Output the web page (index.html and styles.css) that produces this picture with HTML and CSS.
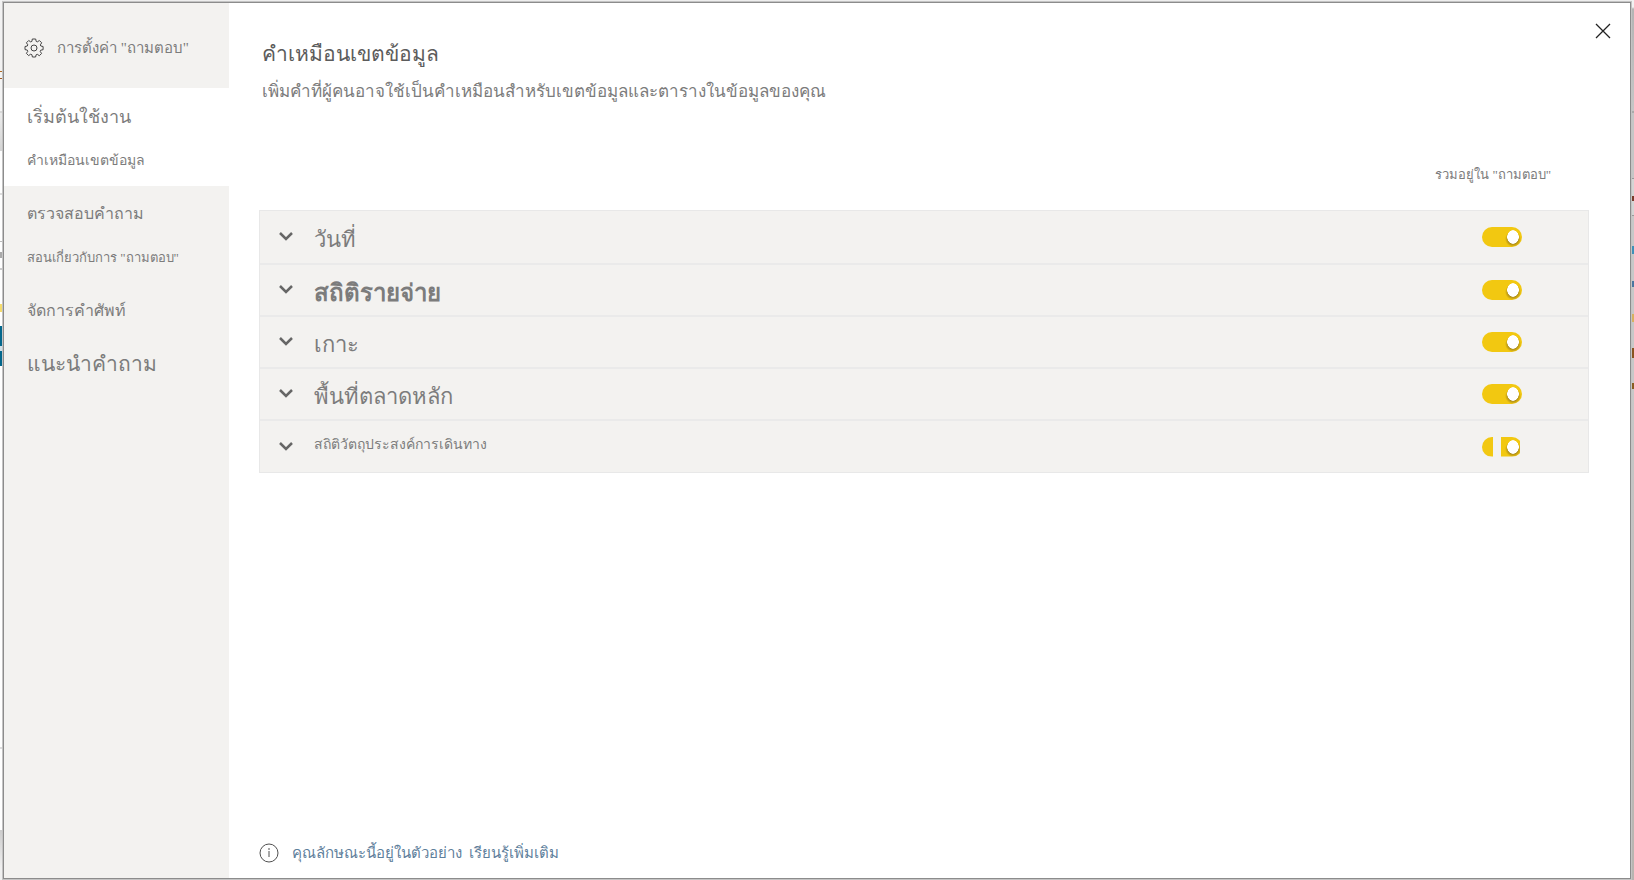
FILE: index.html
```
<!DOCTYPE html>
<html lang="th">
<head>
<meta charset="utf-8">
<title>การตั้งค่า "ถามตอบ"</title>
<link rel="stylesheet" href="styles.css">
</head>
<body>
<div class="backdrop">
<div class="edge edge-left"></div>
<div class="dialog" role="dialog" aria-labelledby="dialog-title">
  <aside class="sidebar">
    <header class="sidebar-head">
      <svg class="gear" viewBox="0 0 20 20" aria-hidden="true"><path d="M8.3 1h3.4l.5 2.4 1.1.5 2.1-1.4 2.3 2.3-1.4 2.1.5 1.1 2.3.5v3.2l-2.4.5-.5 1.2 1.4 2.1-2.3 2.2-2-1.4-1.2.5-.5 2.2H8.4l-.5-2.3-1.2-.5-2.1 1.4-2.2-2.3 1.4-2-.5-1.2-2.3-.5V8.5l2.3-.5.5-1.2-1.4-2 2.3-2.3 2 1.4 1.2-.5z"/><circle cx="10" cy="10" r="3"/></svg>
      <h2 class="sidebar-title" id="dialog-title">การตั้งค่า "ถามตอบ"</h2>
    </header>
    <nav class="nav">
      <div class="nav-group nav-group-active">
        <button class="nav-item nav-lg" type="button">เริ่มต้นใช้งาน</button>
        <button class="nav-item nav-sm" type="button" aria-current="page">คำเหมือนเขตข้อมูล</button>
      </div>
      <div class="nav-rest">
        <div class="nav-group">
          <button class="nav-item nav-md" type="button">ตรวจสอบคำถาม</button>
          <button class="nav-item nav-xs" type="button">สอนเกี่ยวกับการ "ถามตอบ"</button>
        </div>
        <div class="nav-group">
          <button class="nav-item nav-md" type="button">จัดการคำศัพท์</button>
        </div>
        <div class="nav-group">
          <button class="nav-item nav-xl" type="button">แนะนำคำถาม</button>
        </div>
      </div>
    </nav>
  </aside>
  <main class="content">
    <div class="top">
      <div class="heading">
        <h1 class="title">คำเหมือนเขตข้อมูล</h1>
        <p class="subtitle">เพิ่มคำที่ผู้คนอาจใช้เป็นคำเหมือนสำหรับเขตข้อมูลและตารางในข้อมูลของคุณ</p>
      </div>
      <button class="close" type="button" aria-label="ปิด"><svg viewBox="0 0 16 16"><path d="M1 1l14 14M15 1L1 15"/></svg></button>
    </div>
    <p class="column-label">รวมอยู่ใน "ถามตอบ"</p>
    <ul class="rows">
      <li class="row"><button class="expand" type="button" aria-label="ขยาย"><svg viewBox="0 0 14 10"><path d="M1 2l6 6 6-6"/></svg></button><label class="name name-lg" for="t1">วันที่</label><input class="toggle" type="checkbox" id="t1" checked></li>
      <li class="row"><button class="expand" type="button" aria-label="ขยาย"><svg viewBox="0 0 14 10"><path d="M1 2l6 6 6-6"/></svg></button><label class="name name-bold" for="t2">สถิติรายจ่าย</label><input class="toggle" type="checkbox" id="t2" checked></li>
      <li class="row"><button class="expand" type="button" aria-label="ขยาย"><svg viewBox="0 0 14 10"><path d="M1 2l6 6 6-6"/></svg></button><label class="name name-lg" for="t3">เกาะ</label><input class="toggle" type="checkbox" id="t3" checked></li>
      <li class="row"><button class="expand" type="button" aria-label="ขยาย"><svg viewBox="0 0 14 10"><path d="M1 2l6 6 6-6"/></svg></button><label class="name name-lg" for="t4">พื้นที่ตลาดหลัก</label><input class="toggle" type="checkbox" id="t4" checked></li>
      <li class="row"><button class="expand" type="button" aria-label="ขยาย"><svg viewBox="0 0 14 10"><path d="M1 2l6 6 6-6"/></svg></button><label class="name name-sm" for="t5">สถิติวัตถุประสงค์การเดินทาง</label><input class="toggle toggle-split" type="checkbox" id="t5" checked></li>
    </ul>
    <footer class="footer">
      <svg class="info" viewBox="0 0 20 20" aria-hidden="true"><circle cx="10" cy="10" r="9"/><path d="M10 8v6M10 5v2"/></svg>
      <p class="footer-text"><a class="footer-link" href="#">คุณลักษณะนี้อยู่ในตัวอย่าง</a><a class="footer-link" href="#">เรียนรู้เพิ่มเติม</a></p>
    </footer>
  </main>
</div>
<div class="edge edge-right"></div>
</div>
</body>
</html>
```
FILE: styles.css
```
* { box-sizing: border-box; margin: 0; padding: 0; }
body { font-family: "Liberation Serif", serif; color: #7c7c7c; }
button { border: 0; background: none; color: inherit; font: inherit; cursor: pointer; }
svg { display: block; fill: none; stroke: #505050; }

.backdrop { min-height: 100vh; display: flex; background: #eee; }
.edge { width: 2px; }
.edge-left {
  background: linear-gradient(#f2f2f2 71px, #b06a20 71px 72px, #f4f4f4 72px 78px, #a05a20 78px 79px, #f4f4f4 79px 111px,
    #d8d8d8 111px 113px, #ececec 113px, #d4d4d4 151px, #fff 151px 193px, #ddd 193px 195px, #fff 195px 241px,
    #bbb 241px 242px, #fff 242px 252px, #aaa 252px 258px, #fff 258px 268px, #ccc 268px 270px, #fff 270px 304px,
    #f6dc6c 304px 312px, #fff 312px 326px, #03678c 326px 346px, #cfe0e8 346px 351px, #03678c 351px 366px,
    #fff 366px 747px, #ddd 747px 749px, #fff 749px 830px, #ccc 830px, #f0f0f0 868px);
}
.edge-right {
  background: linear-gradient(#f2f2f2 7px, #b4b4b4 9px, #c6c6c6 111px, #aaa 111px 113px, #c6c6c6 113px 178px,
    #999 178px 179px, #d4d4d4 179px 196px, #7a3a2a 196px 201px, #d4d4d4 201px 215px, #999 215px 216px, #c8c8c8 216px 246px,
    #3f90b8 246px 254px, #c8c8c8 254px 281px, #4a76a0 281px 287px, #c8c8c8 287px 314px, #d8b060 314px 322px,
    #c8c8c8 322px 348px, #8a5420 348px 358px, #c8c8c8 358px 383px, #8a5c20 383px 389px, #c8c8c8 389px, #b8b4b0);
}
.dialog {
  flex: 1; display: flex; margin: 2px 1px 1px;
  border: 1px solid #8c8c8c; outline: 1px solid #c4c4c4; background: #fff;
}

.sidebar { width: 225px; background: #f3f2f0; }
.sidebar-head { display: flex; align-items: center; gap: 13px; height: 85px; padding: 5px 0 0 20px; }
.gear { width: 20px; height: 20px; stroke: #444; }
.sidebar-title { font-size: 15px; line-height: 28px; font-weight: 400; }
.nav-group { display: flex; flex-direction: column; align-items: flex-start; gap: 16px; padding-left: 23px; }
.nav-group-active { background: #fff; height: 98px; padding-top: 15px; }
.nav-rest { display: flex; flex-direction: column; gap: 25px; padding-top: 14px; }
.nav-item { line-height: 28px; white-space: nowrap; }
.nav-xs { font-size: 13px; }
.nav-sm { font-size: 14px; }
.nav-md { font-size: 16px; }
.nav-lg { font-size: 18px; }
.nav-xl { font-size: 21px; }

.content { flex: 1; display: flex; flex-direction: column; padding: 0 41px 13px 30px; }
.top { display: flex; justify-content: space-between; align-items: flex-start; }
.heading { padding: 33px 0 0 3px; }
.title { font-size: 21px; line-height: 36px; font-weight: 400; color: #5c5c5c; }
.subtitle { font-size: 17px; line-height: 40px; }
.close { margin: 20px -22px 0 0; width: 16px; height: 16px; }
.close svg { width: 16px; height: 16px; stroke: #222; stroke-width: 1.3; }
.column-label { margin: 51px 0 23px; padding-right: 38px; text-align: right; font-size: 13px; line-height: 24px; }

.rows { list-style: none; border: 1px solid #e8e8e8; background: #f3f2f0; }
.row { display: flex; align-items: center; height: 52px; padding: 0 66px 0 19px; }
.row + .row { border-top: 2px solid #eaeaea; }
.row:last-child { height: 53px; }
.expand { padding-bottom: 2px; }
.expand svg { width: 14px; height: 10px; stroke: #666; stroke-width: 2.5; }
.name { flex: 1; padding: 4px 0 0 21px; }
.name-lg { font-size: 22px; }
.name-bold { font-size: 24px; font-weight: 700; }
.name-sm { font-size: 14px; padding: 0 0 6px 21px; }
.toggle {
  appearance: none; width: 40px; height: 20px; border-radius: 10px; cursor: pointer;
  background:
    radial-gradient(ellipse 6px 7px at 31px 10px, #fff 92%, transparent),
    radial-gradient(ellipse 8px 8px at 31px 12px, #a8891a 60%, transparent),
    #f2c811;
}
.toggle-split { clip-path: polygon(0 0, 11px 0, 11px 100%, 19px 100%, 19px 0, 38px 0, 38px 100%, 0 100%); }

.footer { margin-top: auto; display: flex; align-items: center; gap: 13px; }
.info { width: 20px; height: 20px; }
.footer-text { display: flex; gap: 7px; font-size: 15px; line-height: 24px; }
.footer-link { color: #5f7f9c; text-decoration: none; }
```
